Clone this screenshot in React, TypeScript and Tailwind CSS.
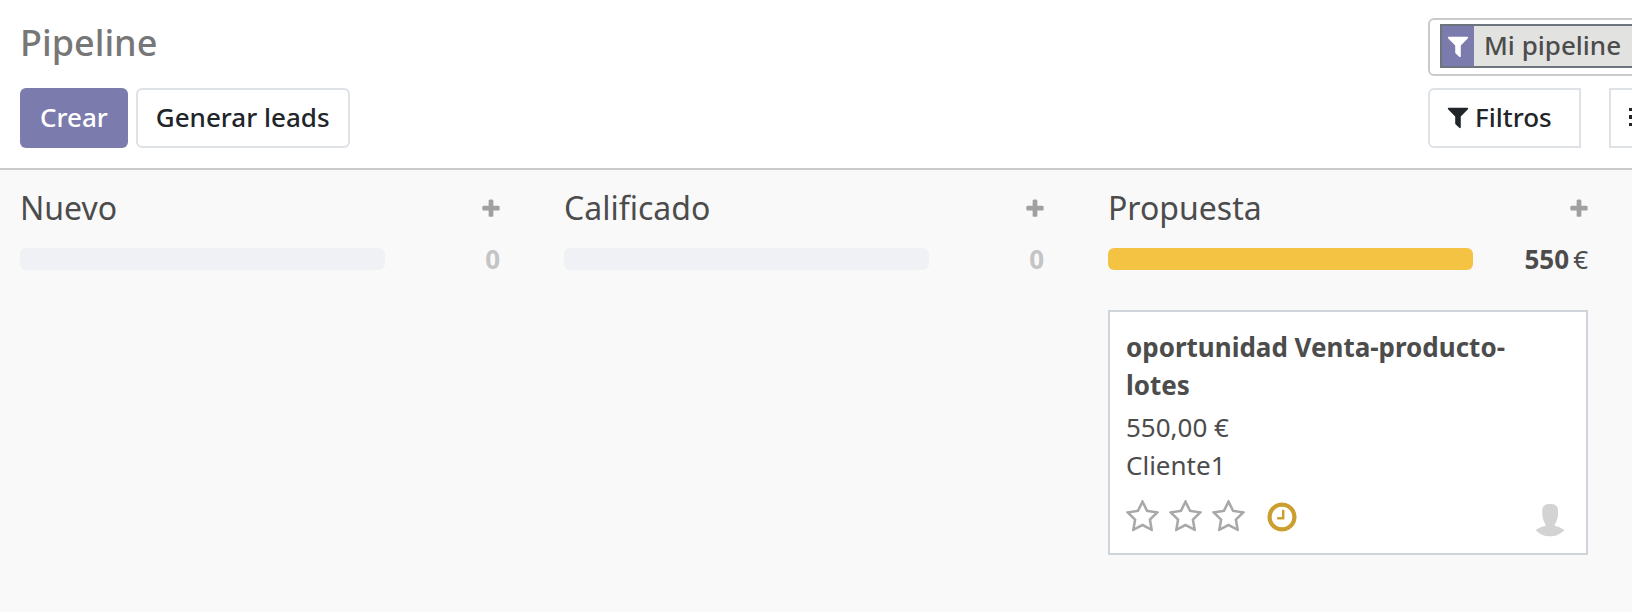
import type { ReactNode } from "react";

const FILTER =
  "M1595 295q17 41-14 70l-493 493v742q0 42-39 59-13 5-25 5-27 0-45-19l-256-256q-19-19-19-45v-486l-493-493q-31-29-14-70 17-39 59-39h1280q42 0 59 39z";
const PLUS =
  "M1600 736v192q0 40-28 68t-68 28h-416v416q0 40-28 68t-68 28h-192q-40 0-68-28t-28-68v-416h-416q-40 0-68-28t-28-68v-192q0-40 28-68t68-28h416v-416q0-40 28-68t68-28h192q40 0 68 28t28 68v416h416q40 0 68 28t28 68z";
const STAR =
  "M1201 1004l306-297-422-62-189-382-189 382-422 62 306 297-73 421 378-199 377 199zm527-357q0 22-26 48l-363 354 86 500q1 7 1 20 0 50-41 50-19 0-40-12l-449-236-449 236q-22 12-40 12-21 0-31.5-14.5t-10.5-35.5q0-6 2-20l86-500-364-354q-25-27-25-48 0-37 56-46l502-73 225-455q19-41 49-41t49 41l225 455 502 73q56 9 56 46z";
const CLOCK =
  "M1024 544v448q0 14-9 23t-23 9h-320q-14 0-23-9t-9-23v-64q0-14 9-23t23-9h224v-352q0-14 9-23t23-9h64q14 0 23 9t9 23zm416 352q0-148-73-273t-198-198-273-73-273 73-198 198-73 273 73 273 198 198 273 73 273-73 198-198 73-273zm224 0q0 209-103 385.5t-279.5 279.5-385.5 103-385.5-103-279.5-279.5-103-385.5 103-385.5 279.5-279.5 385.5-103 385.5 103 279.5 279.5 103 385.5z";

function Glyph({ path, viewBox = "0 0 1792 1792", className }: { path: string; viewBox?: string; className: string }) {
  return (
    <svg viewBox={viewBox} className={`shrink-0 fill-current ${className}`} aria-hidden="true">
      <path d={path} />
    </svg>
  );
}

function Avatar() {
  return (
    <svg viewBox="0 0 120 120" className="size-10 shrink-0 fill-[#d3d3d3]" aria-hidden="true">
      <path d="M37 40C37 27 45 21 60.500 21S84 27 84 40v10c0 14-5 25-11 35 7 4 18 6 30 14-11 12-26 19-43 19s-32-7-43-19c12-8 23-10 31-14-6-10-11-21-11-35z" />
    </svg>
  );
}

function ListLines() {
  return (
    <svg viewBox="0 0 26 20" className="h-5 w-[26px] shrink-0 fill-current" aria-hidden="true">
      <path d="M0 1h4v3H0zM7 1h19v3H7zM0 8h4v4H0zM7 8h19v4H7zM0 16h4v3H0zM7 16h19v3H7z" />
    </svg>
  );
}

type ColumnProps = { title: string; total: ReactNode; filled?: boolean; children?: ReactNode };

function Column({ title, total, filled = false, children }: ColumnProps) {
  return (
    <section className="w-[480px] shrink-0">
      <div className="flex h-12 items-center justify-between">
        <h2 className="text-[32px] leading-12">{title}</h2>
        <button type="button" aria-label={`Añadir a ${title}`} className="-mr-0.5 pt-0.5 text-[#a0a0a0]">
          <Glyph path={PLUS} className="size-[22px]" />
        </button>
      </div>
      <div className="mt-2 flex h-[38px] items-center justify-between">
        <div className={`h-[22px] w-[365px] rounded-md ${filled ? "bg-[#f4c344]" : "bg-[#f0f1f4]"}`} />
        <div className={filled ? "text-[#4c4c4c]" : "text-[#c4c4c4]"}>{total}</div>
      </div>
      {children}
    </section>
  );
}

export default function App() {
  return (
    <div className="flex min-h-screen flex-col overflow-hidden bg-[#f9f9f9] font-['Noto_Sans','Open_Sans',sans-serif] text-[26px] leading-[38px] text-[#4c4c4c]">
      <header className="flex justify-between border-b-2 border-[#cacaca] bg-white pb-5 pl-5">
        <div>
          <h1 className="flex h-[88px] items-center pb-0.5 text-[36px] font-medium text-[#777777]">Pipeline</h1>
          <div className="flex gap-2">
            <button type="button" className="h-[60px] rounded-md bg-[#7c7bad] px-5 pb-0.5 font-medium text-white">
              Crear
            </button>
            <button
              type="button"
              className="h-[60px] rounded-md border-2 border-[#dee2e6] bg-white px-[18px] pb-0.5 font-medium text-[#212529]"
            >
              Generar leads
            </button>
          </div>
        </div>

        <div className="flex w-[204px] shrink-0 flex-col gap-3 overflow-hidden pt-[18px]">
          <div className="flex h-[58px] w-[560px] items-center rounded-md border-2 border-[#cacaca] px-[10px] pb-0.5">
            <div className="flex h-11 items-stretch border-2 border-[#6c757d] bg-[#e2e2e0]">
              <span className="flex w-8 items-center justify-center bg-[#7c7bad] text-white">
                <Glyph path={FILTER} className="size-[26px]" />
              </span>
              <span className="pr-9 pl-[10px] font-medium whitespace-nowrap">Mi pipeline</span>
            </div>
          </div>
          <div className="flex w-[560px] gap-7 text-[#212529]">
            <button
              type="button"
              className="flex h-[60px] w-[153px] items-center gap-1 rounded-l-md border-2 border-[#dee2e6] pb-0.5 pl-[15px] font-medium"
            >
              <Glyph path={FILTER} className="size-[26px]" />
              Filtros
            </button>
            <button
              type="button"
              aria-label="Agrupar por"
              className="flex h-[60px] w-[180px] items-center border-2 border-[#dee2e6] pb-0.5 pl-[18px]"
            >
              <ListLines />
            </button>
          </div>
        </div>
      </header>

      <main className="flex grow gap-16 overflow-hidden px-5 pt-[14px]">
        <Column title="Nuevo" total={<b>0</b>} />
        <Column title="Calificado" total={<b>0</b>} />
        <Column
          title="Propuesta"
          filled
          total={
            <span className="flex gap-1">
              <b>550</b>€
            </span>
          }
        >
          <article className="mt-8 border-2 border-[#ced4da] bg-white px-4 pt-4 pb-4">
            <h3 className="pr-8 font-bold">oportunidad Venta-producto-lotes</h3>
            <p className="mt-1">550,00 €</p>
            <p>Cliente1</p>
            <div className="mt-[13px] flex items-center justify-between">
              <div className="flex items-center">
                <div className="flex gap-[10px] text-[#a8a8a8]">
                  {[1, 2, 3].map((n) => (
                    <button type="button" key={n} aria-label={`Prioridad ${n}`}>
                      <Glyph path={STAR} viewBox="64 0 1664 1792" className="h-9 w-[33px]" />
                    </button>
                  ))}
                </div>
                <button type="button" aria-label="Actividades" className="ml-5 text-[#cb9f2f]">
                  <Glyph path={CLOCK} className="size-[34px]" />
                </button>
              </div>
              <Avatar />
            </div>
          </article>
        </Column>
      </main>
    </div>
  );
}
